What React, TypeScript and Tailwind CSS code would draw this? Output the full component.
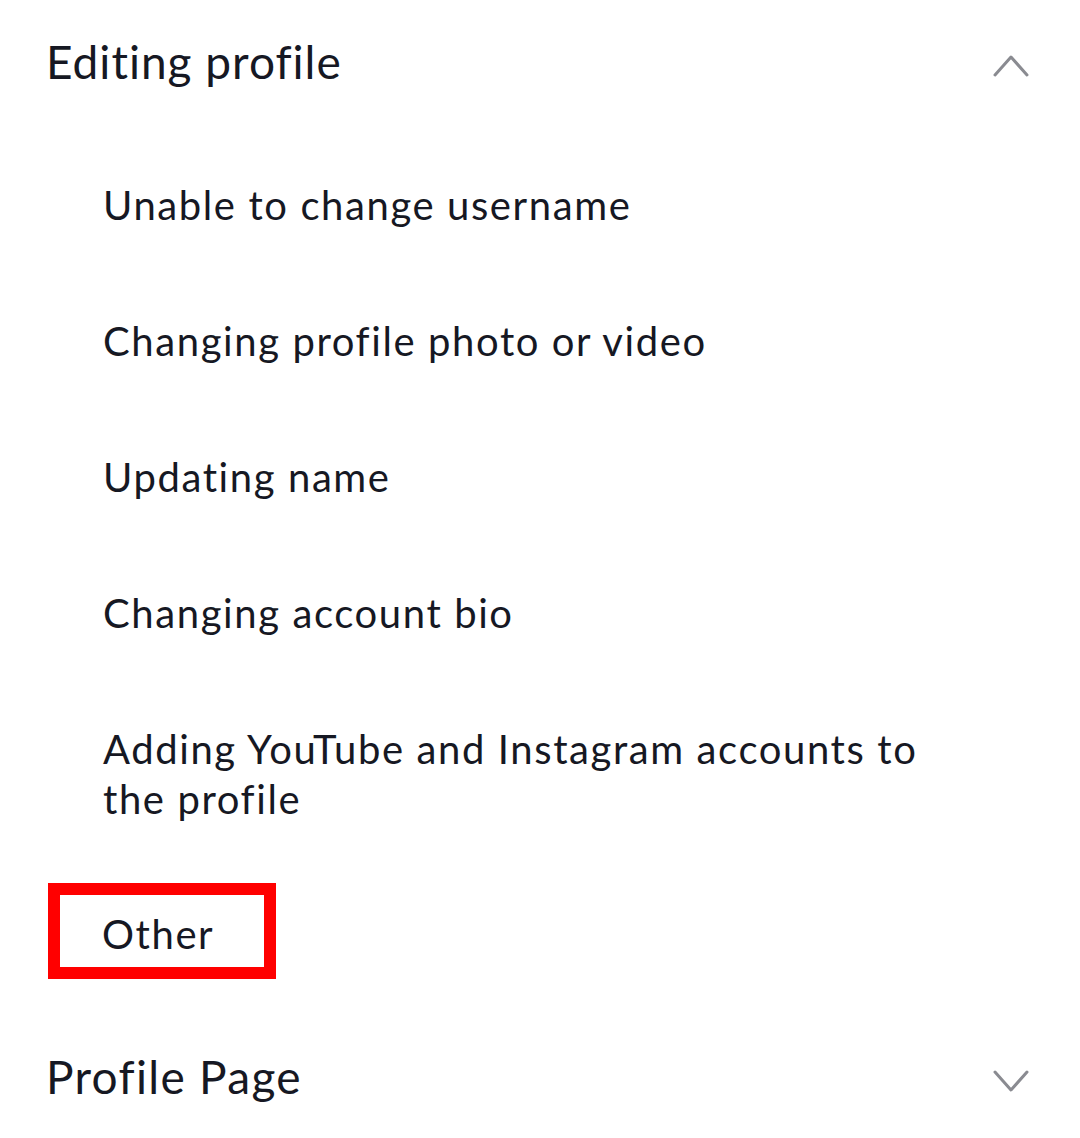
import { ReactNode } from "react";

const items = [
  "Unable to change username",
  "Changing profile photo or video",
  "Updating name",
  "Changing account bio",
  "Adding YouTube and Instagram accounts to the profile",
];

function Chevron({ up }: { up?: boolean }) {
  return (
    <svg width="36" height="24" viewBox="0 0 36 24" fill="none" className="mt-[22px] shrink-0">
      <path
        d={up ? "M2 21 L18 3 L34 21" : "M2 3 L18 21 L34 3"}
        stroke="#8a8b91"
        strokeWidth="3"
        strokeLinecap="round"
        strokeLinejoin="round"
      />
    </svg>
  );
}

function Item({ children }: { children: ReactNode }) {
  return (
    <li className="pl-[55px] pr-[80px] text-[40px] leading-[50px] tracking-[1.6px]">{children}</li>
  );
}

export default function App() {
  return (
    <div
      className="min-h-screen w-[1080px] bg-white px-[48px] text-[#161823]"
      style={{ fontFamily: "Lato, 'Noto Sans', sans-serif" }}
    >
      <div className="flex items-start justify-between pt-[32px] pr-[3px]">
        <h2 className="-ml-[2px] text-[46px] leading-[60px] tracking-[1px]">Editing profile</h2>
        <Chevron up />
      </div>

      <ul className="mt-[88px] flex flex-col gap-[86px]">
        {items.map((t) => (
          <Item key={t}>{t}</Item>
        ))}
      </ul>

      <div className="mt-[59px] box-border flex h-[96px] w-[228px] items-center border-[12px] border-[#ff0000] pl-[42px]">
        <span className="mt-[6px] text-[40px] leading-[50px] tracking-[1.6px]">Other</span>
      </div>

      <div className="mt-[68px] flex items-start justify-between pr-[3px]">
        <h2 className="-ml-[2px] text-[46px] leading-[60px] tracking-[1.3px]">Profile Page</h2>
        <Chevron />
      </div>
    </div>
  );
}
